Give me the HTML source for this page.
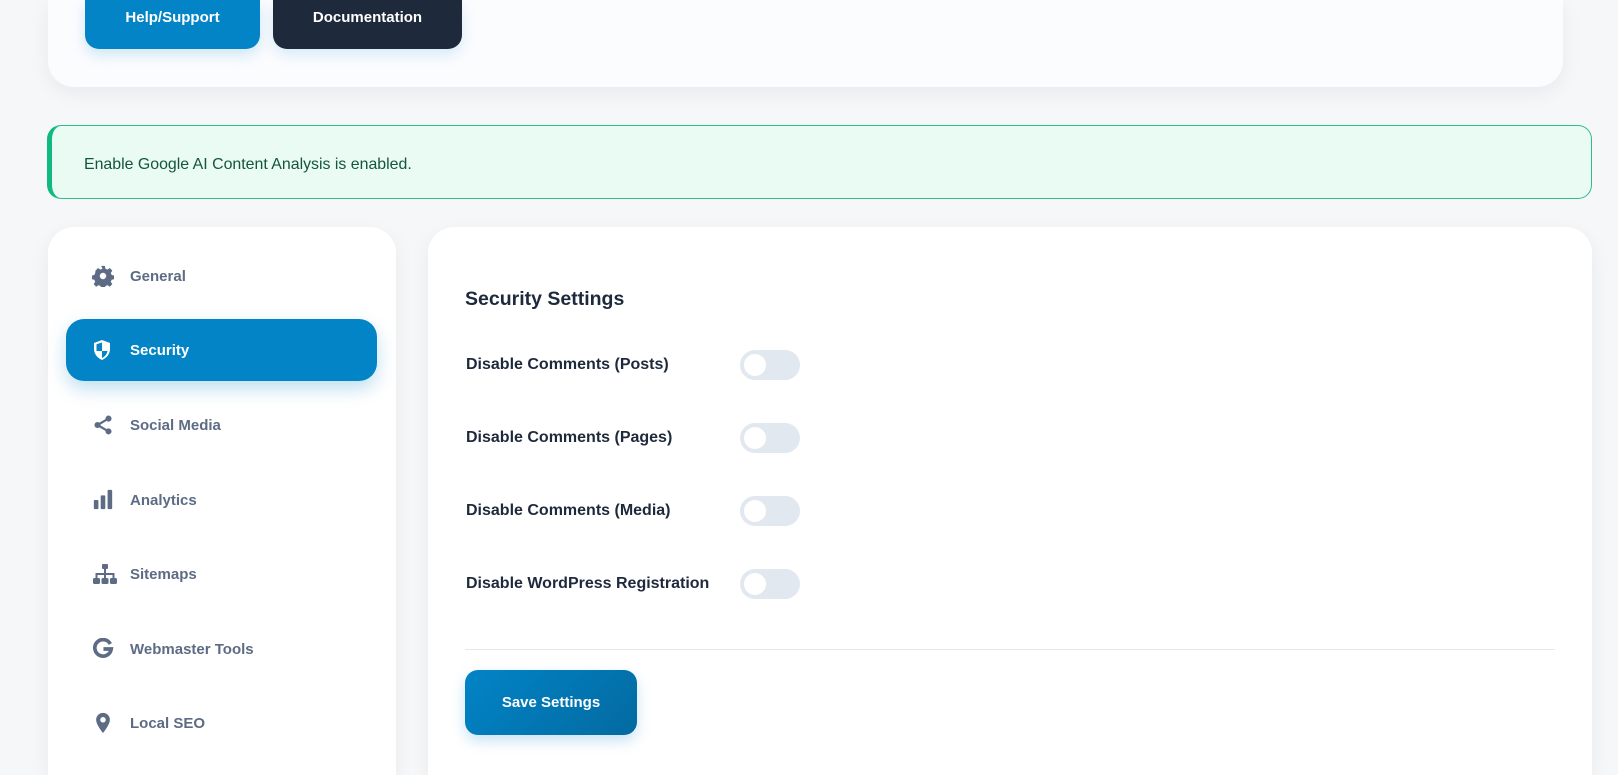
<!DOCTYPE html>
<html><head><style>
*{box-sizing:border-box;margin:0;padding:0}
html,body{width:1618px;height:775px;overflow:hidden}
body{background:#f6f7f9;font-family:"Liberation Sans",sans-serif;position:relative}
.card{position:absolute;background:#fff;border-radius:26px;box-shadow:0 6px 20px rgba(15,23,42,0.06)}
.btn{position:absolute;border-radius:14px;color:#fff;font-weight:700;font-size:15px;display:flex;align-items:center;justify-content:center}
.alert{position:absolute;left:47px;top:125px;width:1545px;height:74px;background:#eafbf3;border:1px solid #34b98a;border-left:5px solid #10b981;border-radius:14px;color:#14553f;font-size:15.9px;padding-left:32px;padding-top:6px;display:flex;align-items:center}
.item{position:absolute;left:66px;width:311px;height:62px;display:flex;align-items:center;color:#5d6c84;font-size:15px;font-weight:700}
.item svg{position:absolute;left:26px}
.item span{position:absolute;left:64px}
.item.active{background:#0284c7;color:#fff;border-radius:18px;box-shadow:0 8px 18px rgba(2,132,199,0.25)}
.lbl{position:absolute;left:466px;font-size:16px;color:#1e293b;font-weight:600;transform:translateY(-50%)}
.tg{position:absolute;left:740px;width:60px;height:30px;border-radius:15px;background:#e2e8f0;transform:translateY(-50%)}
.tg::after{content:"";position:absolute;left:4px;top:4px;width:22px;height:22px;border-radius:50%;background:#fff}
</style></head><body>
<div class="card" style="left:48px;top:0;width:1515px;height:87px;border-radius:0 0 26px 26px;background:#fbfcfe"></div>
<div class="btn" style="left:85px;top:0;width:175px;height:49px;border-radius:0 0 14px 14px;padding-bottom:14px;background:#0284c7;box-shadow:0 6px 14px rgba(2,132,199,0.18)">Help/Support</div>
<div class="btn" style="left:273px;top:0;width:189px;height:49px;border-radius:0 0 14px 14px;padding-bottom:14px;background:#1e293b;box-shadow:0 6px 14px rgba(2,132,199,0.15)">Documentation</div>
<div class="alert">Enable Google AI Content Analysis is enabled.</div>

<div class="card" style="left:48px;top:227px;width:348px;height:548px;border-radius:26px 26px 0 0"></div>
<div class="card" style="left:428px;top:227px;width:1164px;height:548px;border-radius:26px 26px 0 0"></div>

<div class="item" style="top:245px"><svg width="22" height="22" viewBox="0 0 24 24"><path fill="#5d6c84" d="M10 1h4l.6 3 2.2 1 2.6-1.7 2.8 2.8-1.7 2.6 1 2.2 3 .6v4l-3 .6-1 2.2 1.7 2.6-2.8 2.8-2.6-1.7-2.2 1-.6 3h-4l-.6-3-2.2-1-2.6 1.7-2.8-2.8 1.7-2.6-1-2.2-3-.6v-4l3-.6 1-2.2L3.8 6.1l2.8-2.8 2.6 1.7 2.2-1z"/><circle cx="12" cy="12" r="3.5" fill="#fff"/></svg><span>General</span></div>
<div class="item active" style="top:319px"><svg width="20" height="22" viewBox="0 0 20 22"><path fill="#fff" d="M10 1L2 4v6c0 5 3.5 9 8 11 4.5-2 8-6 8-11V4z"/><path fill="#0284c7" d="M10 3.5v8.5H4.5V5.3zM10 12h5.5c-.6 3.5-2.8 5.8-5.5 7z"/></svg><span>Security</span></div>
<div class="item" style="top:394px"><svg width="22" height="22" viewBox="0 0 24 24"><g fill="#5d6c84"><circle cx="18" cy="5" r="3.3"/><circle cx="6" cy="12" r="3.3"/><circle cx="18" cy="19" r="3.3"/></g><path d="M18 5L6 12l12 7" stroke="#5d6c84" stroke-width="2.4" fill="none"/></svg><span>Social Media</span></div>
<div class="item" style="top:469px"><svg width="22" height="22" viewBox="0 0 24 24"><g fill="#5d6c84"><rect x="2" y="12" width="5" height="10" rx="1"/><rect x="9.5" y="7" width="5" height="15" rx="1"/><rect x="17" y="1" width="5" height="21" rx="1"/></g></svg><span>Analytics</span></div>
<div class="item" style="top:543px"><svg width="26" height="22" viewBox="0 0 26 22"><g fill="#5d6c84"><rect x="10" y="1" width="6" height="5" rx="1"/><rect x="1" y="15" width="7" height="6" rx="1.5"/><rect x="9.5" y="15" width="7" height="6" rx="1.5"/><rect x="18" y="15" width="7" height="6" rx="1.5"/></g><path d="M13 6v9M4.5 15v-4h17v4" stroke="#5d6c84" stroke-width="2" fill="none"/></svg><span>Sitemaps</span></div>
<div class="item" style="top:618px"><svg width="22" height="22" viewBox="0 0 24 24"><path d="M20 6.5A9 9 0 1 0 21 12h-8.5" stroke="#5d6c84" stroke-width="4" fill="none"/></svg><span>Webmaster Tools</span></div>
<div class="item" style="top:692px"><svg width="22" height="22" viewBox="0 0 24 24"><path fill="#5d6c84" d="M12 1a7.5 7.5 0 0 0-7.5 7.5C4.5 14 12 23 12 23s7.5-9 7.5-14.5A7.5 7.5 0 0 0 12 1z"/><circle cx="12" cy="8.5" r="3" fill="#fff"/></svg><span>Local SEO</span></div>

<div style="position:absolute;left:465px;top:288px;font-size:19.5px;font-weight:600;color:#1e293b">Security Settings</div>
<div class="lbl" style="top:365px">Disable Comments (Posts)</div><div class="tg" style="top:365px"></div>
<div class="lbl" style="top:438px">Disable Comments (Pages)</div><div class="tg" style="top:438px"></div>
<div class="lbl" style="top:511px">Disable Comments (Media)</div><div class="tg" style="top:511px"></div>
<div class="lbl" style="top:584px">Disable WordPress Registration</div><div class="tg" style="top:584px"></div>
<div style="position:absolute;left:465px;top:649px;width:1090px;height:1px;background:#e5e9ef"></div>
<div class="btn" style="left:465px;top:670px;width:172px;height:65px;border-radius:13px;background:linear-gradient(135deg,#0284c7,#036aa0);box-shadow:0 6px 14px rgba(2,132,199,0.22)">Save Settings</div>
</body></html>
